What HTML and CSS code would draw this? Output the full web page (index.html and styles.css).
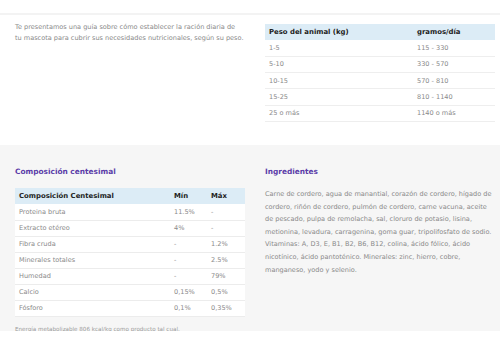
FILE: index.html
```html
<!DOCTYPE html>
<html lang="es">
<head>
<meta charset="utf-8">
<link rel="stylesheet" href="styles.css">
</head>
<body>
<div class="topline"></div>
<section class="row top">
  <div class="col">
    <p class="intro">Te presentamos una guía sobre cómo establecer la ración diaria de<br>tu mascota para cubrir sus necesidades nutricionales, según su peso.</p>
  </div>
  <div class="col">
    <table class="tbl weight">
      <thead><tr><th>Peso del animal (kg)</th><th class="c2">gramos/día</th></tr></thead>
      <tbody>
        <tr><td>1-5</td><td>115 - 330</td></tr>
        <tr><td>5-10</td><td>330 - 570</td></tr>
        <tr><td>10-15</td><td>570 - 810</td></tr>
        <tr><td>15-25</td><td>810 - 1140</td></tr>
        <tr><td>25 o más</td><td>1140 o más</td></tr>
      </tbody>
    </table>
  </div>
</section>
<section class="row bottom">
  <div class="col">
    <h2>Composición centesimal</h2>
    <table class="tbl comp">
      <thead><tr><th>Composición Centesimal</th><th class="mn">Mín</th><th class="mx">Máx</th></tr></thead>
      <tbody>
        <tr><td>Proteina bruta</td><td>11.5%</td><td>-</td></tr>
        <tr><td>Extracto etéreo</td><td>4%</td><td>-</td></tr>
        <tr><td>Fibra cruda</td><td>-</td><td>1.2%</td></tr>
        <tr><td>Minerales totales</td><td>-</td><td>2.5%</td></tr>
        <tr><td>Humedad</td><td>-</td><td>79%</td></tr>
        <tr><td>Calcio</td><td>0,15%</td><td>0,5%</td></tr>
        <tr><td>Fósforo</td><td>0,1%</td><td>0,35%</td></tr>
      </tbody>
    </table>
    <p class="note">Energía metabolizable 806 kcal/kg como producto tal cual.</p>
  </div>
  <div class="col">
    <h2>Ingredientes</h2>
    <p class="ingr">Carne de cordero, agua de manantial, corazón de cordero, hígado de cordero, riñón de cordero, pulmón de cordero, carne vacuna, aceite de pescado, pulpa de remolacha, sal, cloruro de potasio, lisina, metionina, levadura, carragenina, goma guar, tripolifosfato de sodio. Vitaminas: A, D3, E, B1, B2, B6, B12, colina, ácido fólico, ácido nicotínico, ácido pantoténico. Minerales: zinc, hierro, cobre, manganeso, yodo y selenio.</p>
  </div>
</section>
</body>
</html>
```
FILE: styles.css
```css
* { box-sizing: border-box; }
html, body { margin: 0; padding: 0; background: #fff; }
body {
  font-family: "DejaVu Sans", "Open Sans", sans-serif;
  font-size: 6.55px;
  color: #8a8a8a;
  width: 500px;
}
.topline { height: 15px; border-bottom: 2px solid #f3f3f3; }
.row {
  display: grid;
  grid-template-columns: 230px 230px;
  column-gap: 20px;
  padding-left: 15px;
}
.top { padding-top: 9px; height: 130px; }
.intro { margin: -2px 0 0; line-height: 11px; }
.tbl { width: 100%; border-collapse: collapse; }
.tbl th {
  background: #dcecf6;
  color: #222;
  font-weight: bold;
  font-size: 6.9px;
  text-align: left;
  height: 16px;
  padding: 0 4px;
}
.tbl td {
  height: 16.3px;
  padding: 0 4px;
  border-bottom: 1px solid #eeeeee;
  background: #fff;
}
.weight .c2 { width: 82px; }
.bottom { background: #f6f6f6; padding-top: 21px; height: 186px; }
h2 {
  margin: 0 0 10px;
  color: #5a3ca8;
  font-size: 7.4px;
  font-weight: bold;
  height: 12px;
  line-height: 12px;
}
.comp td { height: 16px; border-bottom: 1px solid #ececec; }
.comp .mn { width: 37px; }
.comp .mx { width: 38px; }
.note { margin: 9px 0 0; font-size: 5.6px; color: #9a9a9a; }
.ingr { margin: 0; line-height: 12.6px; }
```
